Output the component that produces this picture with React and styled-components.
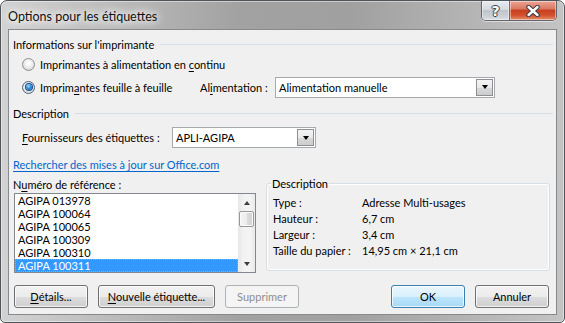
import React from 'react'
import styled, { createGlobalStyle } from 'styled-components'

const GlobalStyle = createGlobalStyle`
  html, body {
    margin: 0;
    padding: 0;
    background: #ffffff;
  }
  body {
    font: 11px/15px Lato, 'Noto Sans', sans-serif;
    color: #000;
    white-space: nowrap;
  }
  u {
    text-underline-offset: 2px;
  }
`

const Window = styled.div`
  width: 565px;
  height: 323px;
  box-sizing: border-box;
  display: flex;
  flex-direction: column;
  border: 1px solid #50555c;
  border-radius: 7px 7px 5px 5px;
  background: linear-gradient(to right, #d2d2d2 0%, #bdbdbd 18%, #a2a2a2 42%, #a0a0a0 62%, #b3b3b3 82%, #c4c4c4 100%);
  box-shadow: inset 0 0 0 1px rgba(255, 255, 255, 0.45);
  overflow: hidden;
`

const TitleBar = styled.div`
  height: 28px;
  flex: none;
  display: flex;
  align-items: flex-start;
  padding-left: 7px;
  padding-right: 7px;
`

const TitleText = styled.div`
  align-self: center;
  margin-top: 2px;
  font-size: 12.5px;
  color: #111;
  text-shadow: 0 0 6px #fff, 0 0 10px #fff, 0 0 14px rgba(255, 255, 255, 0.9);
`

const Caption = styled.div`
  margin-left: auto;
  display: flex;
  height: 19px;
  border: 1px solid #62666c;
  border-top: none;
  border-radius: 0 0 5px 5px;
  overflow: hidden;
  box-shadow: 0 1px 0 rgba(255, 255, 255, 0.5);
`

const CaptionButton = styled.div`
  width: ${p => p.$w}px;
  height: 100%;
  display: flex;
  align-items: center;
  justify-content: center;
  box-shadow: inset 0 0 0 1px rgba(255, 255, 255, 0.45);
  background: ${p => p.$close
    ? 'linear-gradient(#eba595 0%, #da7a62 40%, #c8401f 50%, #d3502f 75%, #e58f6c 100%)'
    : 'linear-gradient(#e9ebee 0%, #d5d9dd 45%, #bfc5cb 50%, #ccd1d6 80%, #dadee2 100%)'};
  & + & {
    border-left: 1px solid #6a6e74;
  }
`

const HelpGlyph = styled.span`
  font: bold 14px/14px 'DejaVu Sans', sans-serif;
  color: #fff;
  text-shadow: 0 0 1px #3c4450, 1px 0 0 #3c4450, -1px 0 0 #3c4450, 0 1px 0 #3c4450, 0 -1px 0 #3c4450;
`

const Content = styled.div`
  flex: 1;
  margin: 0 7px 7px 7px;
  border: 1px solid #858a91;
  background: #f0f0f0;
  display: flex;
  flex-direction: column;
`

const GroupHeader = styled.div`
  display: flex;
  align-items: center;
  height: 15px;
  margin: ${p => p.$top}px 3px 0 4px;
  &::after {
    content: '';
    flex: 1;
    margin-left: 6px;
    border-top: 1px solid #d5dfe5;
  }
`

const Row = styled.div`
  display: flex;
  align-items: center;
  height: ${p => p.$h}px;
  margin-top: ${p => p.$top}px;
  padding-left: 13px;
`

const RadioLabel = styled.label`
  display: flex;
  align-items: center;
  gap: 5px;
  width: ${p => (p.$w ? `${p.$w}px` : 'auto')};
`

const RadioDot = styled.span`
  width: 13px;
  height: 13px;
  box-sizing: border-box;
  border-radius: 50%;
  border: 1px solid ${p => (p.$checked ? '#4f6680' : '#8e8f8f')};
  background: radial-gradient(circle at 50% 40%, #ffffff 0%, #f3f3f3 35%, #d6d6d6 80%, #c4c4c4 100%);
  display: flex;
  align-items: center;
  justify-content: center;
  &::after {
    content: '';
    display: ${p => (p.$checked ? 'block' : 'none')};
    width: 6px;
    height: 6px;
    border-radius: 50%;
    background: radial-gradient(circle at 40% 35%, #a6e0ff 0%, #2f8fdc 45%, #114f93 100%);
    box-shadow: 0 0 0 1px #1b4f86;
  }
`

const FieldLabel = styled.span`
  width: ${p => p.$w}px;
  flex: none;
`

const Combo = styled.div`
  width: ${p => p.$w}px;
  height: 21px;
  box-sizing: border-box;
  display: flex;
  align-items: center;
  border: 1px solid #a6a9ae;
  background: #fff;
  padding: 1px;
`

const ComboValue = styled.span`
  flex: 1;
  padding-left: 2px;
`

const ComboButton = styled.span`
  width: 17px;
  height: 17px;
  box-sizing: border-box;
  border: 1px solid #8c8f94;
  background: linear-gradient(#f4f4f4 0%, #e9e9e9 50%, #d9d9d9 51%, #cdcdcd 100%);
  display: flex;
  align-items: center;
  justify-content: center;
  &::after {
    content: '';
    border-left: 3.5px solid transparent;
    border-right: 3.5px solid transparent;
    border-top: 4px solid #000;
  }
`

const Link = styled.a`
  display: block;
  margin: 9px 0 0 4px;
  height: 15px;
  color: #0066cc;
  text-decoration: underline;
  text-underline-offset: 2px;
  align-self: flex-start;
`

const Bottom = styled.div`
  display: flex;
  gap: 10px;
  margin-top: 5px;
  padding-left: 5px;
`

const LeftColumn = styled.div`
  width: 242px;
  display: flex;
  flex-direction: column;
`

const SmallLabel = styled.div`
  height: 15px;
  margin-left: -1px;
`

const ListBox = styled.div`
  margin-top: 1px;
  height: 80px;
  box-sizing: border-box;
  border: 1px solid #828790;
  background: #fff;
  display: flex;
`

const Items = styled.div`
  flex: 1;
  display: flex;
  flex-direction: column;
`

const Item = styled.div`
  height: 13px;
  line-height: 13px;
  padding-left: 3px;
  box-sizing: border-box;
  ${p => p.$selected && `
    background: #3399ff;
    color: #fff;
    outline: 1px dotted #f0a030;
    outline-offset: -1px;
  `}
`

const ScrollBar = styled.div`
  width: 17px;
  display: flex;
  flex-direction: column;
  align-items: center;
  background: linear-gradient(to right, #e6e6e6 0%, #f2f2f2 30%, #f4f4f4 70%, #e9e9e9 100%);
`

const Arrow = styled.span`
  height: 17px;
  display: flex;
  align-items: center;
  justify-content: center;
  &::after {
    content: '';
    border-left: 3.5px solid transparent;
    border-right: 3.5px solid transparent;
    ${p => (p.$up ? 'border-bottom: 4px solid #3e3e3e;' : 'border-top: 4px solid #3e3e3e;')}
  }
`

const Thumb = styled.span`
  width: 15px;
  height: 16px;
  box-sizing: border-box;
  border: 1px solid #979797;
  border-radius: 2px;
  background: linear-gradient(to right, #f5f5f5 0%, #ececec 50%, #dcdcdc 51%, #d2d2d2 100%);
  box-shadow: inset 0 0 0 1px #fbfbfb;
`

const TrackFill = styled.span`
  flex: 1;
`

const GroupBox = styled.div`
  position: relative;
  width: 284px;
  height: 88px;
  margin-top: 6px;
  box-sizing: border-box;
  border: 1px solid #d5dfe5;
  border-radius: 3px;
  box-shadow: inset 0 0 0 1px #fff;
  padding: 11px 0 0 6px;
`

const GroupCaption = styled.span`
  position: absolute;
  top: -8px;
  left: 4px;
  padding: 0 1px;
  background: #f0f0f0;
`

const InfoRow = styled.div`
  display: flex;
  height: 16px;
  line-height: 16px;
`

const InfoLabel = styled.span`
  width: 89px;
`

const ButtonRow = styled.div`
  display: flex;
  gap: 10px;
  margin-top: 12px;
  padding: 0 7px 0 5px;
`

const Spacer = styled.div`
  flex: 1;
`

const Button = styled.button`
  width: ${p => p.$w || 74}px;
  height: 23px;
  box-sizing: border-box;
  padding: 0;
  font: inherit;
  color: ${p => (p.disabled ? '#8d8d8d' : '#000')};
  border-radius: 3px;
  border: 1px solid ${p => (p.disabled ? '#adb2b5' : p.$default ? '#3c7fb1' : '#707070')};
  background: ${p => p.disabled
    ? '#f4f4f4'
    : p.$default
      ? 'linear-gradient(#eaf6fd 0%, #d9f0fc 50%, #bee6fd 51%, #a7d9f5 100%)'
      : 'linear-gradient(#f2f2f2 0%, #ebebeb 50%, #dddddd 51%, #cfcfcf 100%)'};
  box-shadow: ${p => (p.disabled ? 'none' : 'inset 0 0 0 1px rgba(255, 255, 255, 0.75)')};
`

const CloseIcon = () => (
  <svg width="16" height="12" viewBox="0 0 16 12">
    <path
      d="M3.5 2 L12.5 10 M12.5 2 L3.5 10"
      stroke="#3a3a44"
      strokeWidth="4.4"
      strokeLinecap="round"
      fill="none"
    />
    <path
      d="M3.5 2 L12.5 10 M12.5 2 L3.5 10"
      stroke="#fff"
      strokeWidth="2.4"
      strokeLinecap="round"
      fill="none"
    />
  </svg>
)

const references = [
  'AGIPA 013978',
  'AGIPA 100064',
  'AGIPA 100065',
  'AGIPA 100309',
  'AGIPA 100310',
  'AGIPA 100311'
]

const details = [
  ['Type :', 'Adresse Multi-usages'],
  ['Hauteur :', '6,7 cm'],
  ['Largeur :', '3,4 cm'],
  ['Taille du papier :', '14,95 cm × 21,1 cm']
]

export default function App () {
  return (
    <>
      <GlobalStyle />
      <Window>
        <TitleBar>
          <TitleText>Options pour les étiquettes</TitleText>
          <Caption>
            <CaptionButton $w={27}><HelpGlyph>?</HelpGlyph></CaptionButton>
            <CaptionButton $w={46} $close><CloseIcon /></CaptionButton>
          </Caption>
        </TitleBar>
        <Content>
          <GroupHeader $top={7}>Informations sur l'imprimante</GroupHeader>
          <Row $h={16} $top={4}>
            <RadioLabel>
              <RadioDot />
              <span>Imprimantes à alimentation en <u>c</u>ontinu</span>
            </RadioLabel>
          </Row>
          <Row $h={22} $top={4}>
            <RadioLabel $w={178}>
              <RadioDot $checked />
              <span>Imprim<u>a</u>ntes feuille à feuille</span>
            </RadioLabel>
            <FieldLabel $w={75}>Al<u>i</u>mentation :</FieldLabel>
            <Combo $w={220}>
              <ComboValue>Alimentation manuelle</ComboValue>
              <ComboButton />
            </Combo>
          </Row>
          <GroupHeader $top={8}>Description</GroupHeader>
          <Row $h={21} $top={6}>
            <FieldLabel $w={150}><u>F</u>ournisseurs des étiquettes :</FieldLabel>
            <Combo $w={144}>
              <ComboValue>APLI-AGIPA</ComboValue>
              <ComboButton />
            </Combo>
          </Row>
          <Link>Rechercher des mises à jour sur Office.com</Link>
          <Bottom>
            <LeftColumn>
              <SmallLabel>N<u>u</u>méro de référence :</SmallLabel>
              <ListBox>
                <Items>
                  {references.map((ref, i) => (
                    <Item key={ref} $selected={i === references.length - 1}>{ref}</Item>
                  ))}
                </Items>
                <ScrollBar>
                  <Arrow $up />
                  <Thumb />
                  <TrackFill />
                  <Arrow />
                </ScrollBar>
              </ListBox>
            </LeftColumn>
            <GroupBox>
              <GroupCaption>Description</GroupCaption>
              {details.map(([label, value]) => (
                <InfoRow key={label}>
                  <InfoLabel>{label}</InfoLabel>
                  <span>{value}</span>
                </InfoRow>
              ))}
            </GroupBox>
          </Bottom>
          <ButtonRow>
            <Button><u>D</u>étails...</Button>
            <Button $w={117}><u>N</u>ouvelle étiquette...</Button>
            <Button disabled>Supprimer</Button>
            <Spacer />
            <Button $default>OK</Button>
            <Button>Annuler</Button>
          </ButtonRow>
        </Content>
      </Window>
    </>
  )
}
